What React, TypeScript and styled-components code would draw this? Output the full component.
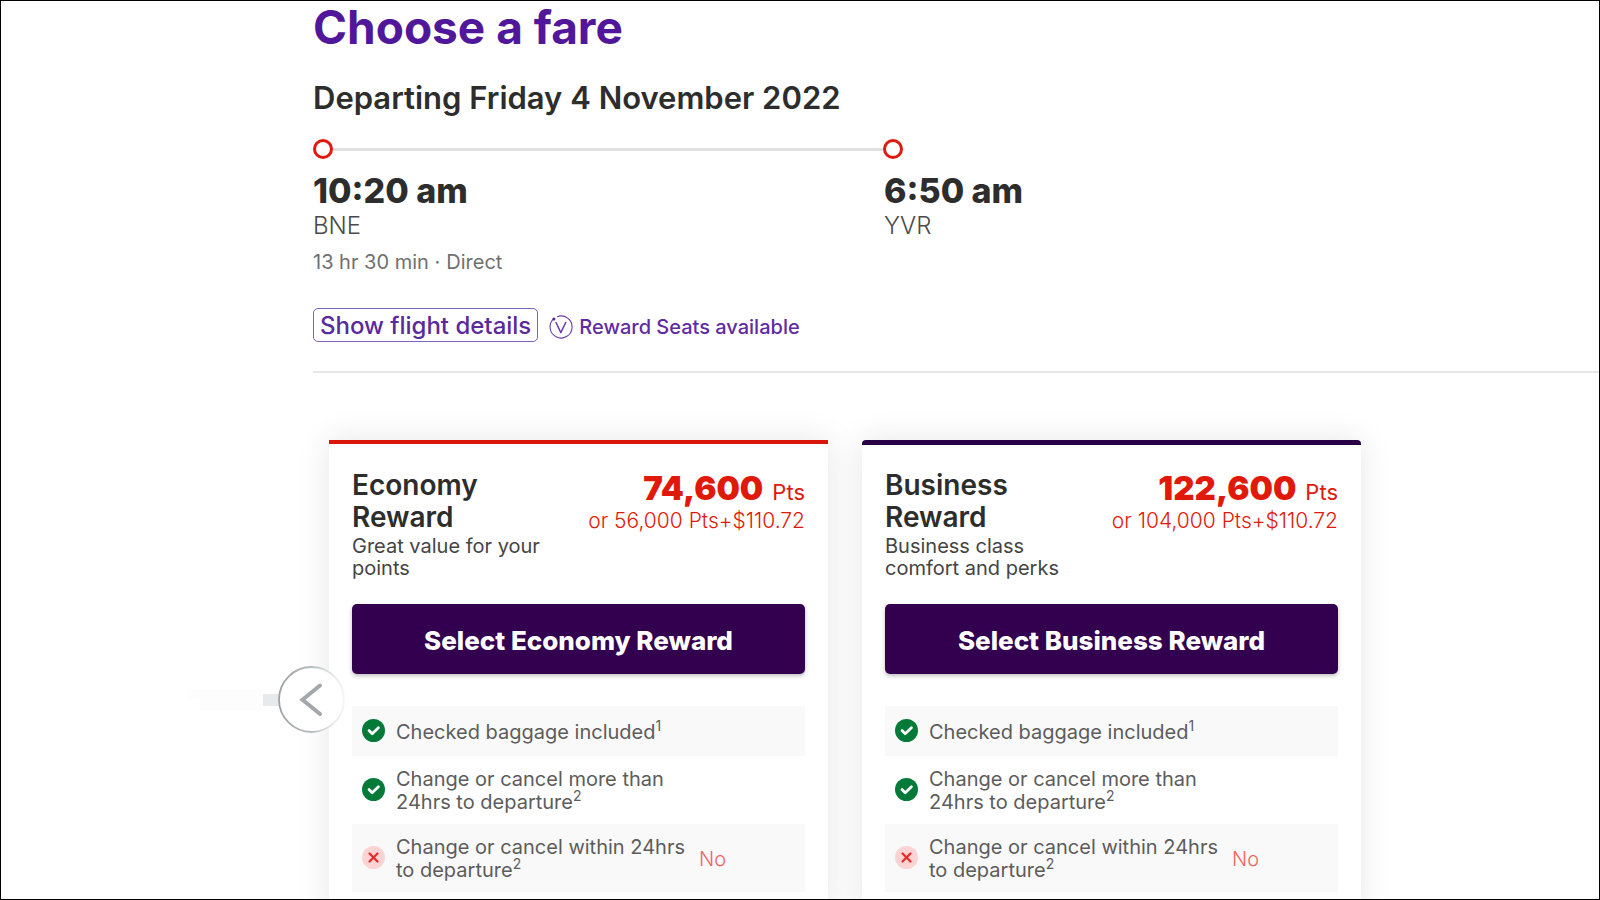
import React from 'react';
import styled, { createGlobalStyle } from 'styled-components';

const GlobalStyle = createGlobalStyle`
  *, *::before, *::after { box-sizing: border-box; }
  body {
    margin: 0;
    background: #fff;
    color: #2d2d2d;
    font-family: Inter, "Open Sans", sans-serif;
  }
  h1, h2, h3, p, ul { margin: 0; padding: 0; }
  button { font-family: inherit; cursor: pointer; }
`;

const Page = styled.main`
  height: 100vh;
  overflow: hidden;
  border: 1px solid #000;
  padding-left: 312px;
`;

const Title = styled.h1`
  color: #51179a;
  font-size: 46px;
  font-weight: 700;
  line-height: 52px;
`;

const DepartureDate = styled.h2`
  margin-top: 25px;
  font-size: 31px;
  font-weight: 600;
  line-height: 40px;
`;

const Track = styled.div`
  display: flex;
  align-items: center;
  max-width: 590px;
  margin-top: 21px;
`;

const Stop = styled.span`
  flex: none;
  width: 20px;
  height: 20px;
  border: 3px solid #e01a0e;
  border-radius: 50%;
`;

const Leg = styled.span`
  flex: 1;
  height: 3px;
  background: #e0e0e0;
`;

const Times = styled.div`
  display: grid;
  grid-template-columns: 571px 1fr;
  margin-top: 12px;
`;

const Time = styled.p`
  font-size: 34px;
  font-weight: 800;
  line-height: 40px;
`;

const Airport = styled.p`
  color: #4a4a4a;
  font-size: 24px;
  font-weight: 300;
  line-height: 30px;
`;

const Duration = styled.p`
  display: flex;
  gap: 6px;
  margin-top: 7px;
  color: #707070;
  font-size: 20px;
  line-height: 28px;
`;

const Actions = styled.div`
  display: flex;
  align-items: center;
  gap: 11px;
  margin-top: 32px;
  padding-bottom: 29px;
  border-bottom: 2px solid #e6e6e6;
`;

const DetailsButton = styled.button`
  height: 34px;
  padding: 2px 6px 0;
  border: 1px solid #7d62c4;
  border-radius: 5px;
  background: #fff;
  color: #5a2a9d;
  font-size: 24px;
  font-weight: 500;
  line-height: 30px;
`;

const SeatsNote = styled.span`
  display: flex;
  align-items: center;
  gap: 6px;
  padding-top: 3px;
  color: #5f2ba3;
  font-size: 20px;
  font-weight: 500;
  line-height: 24px;
`;

const Fares = styled.section`
  position: relative;
  display: flex;
  gap: 34px;
  margin: 67px 16px 0 16px;
`;

const Card = styled.article<{ $accent: string; $bar: number; $radius: number }>`
  flex: 0 1 499px;
  padding: ${(p) => 29 - p.$bar}px 23px 24px;
  border-top: ${(p) => p.$bar}px solid ${(p) => p.$accent};
  border-radius: ${(p) => p.$radius}px;
  background: #fff;
  box-shadow: 0 0 32px rgba(0, 0, 0, 0.1);
`;

const CardHead = styled.header`
  display: flex;
  justify-content: space-between;
`;

const Naming = styled.div`
  width: 200px;
`;

const FareName = styled.h3`
  width: min-content;
  font-size: 28px;
  font-weight: 600;
  line-height: 32px;
`;

const Tagline = styled.p`
  margin-top: 2px;
  color: #444;
  font-size: 20px;
  line-height: 22px;
`;

const Pricing = styled.div`
  color: #e1190a;
  text-align: right;
  white-space: nowrap;
`;

const Price = styled.p`
  display: flex;
  align-items: baseline;
  justify-content: flex-end;
  gap: 9px;
  font-size: 22px;
  line-height: 38px;
`;

const Points = styled.strong`
  font-size: 33px;
  font-weight: 900;
`;

const AltPrice = styled.p`
  font-size: 21px;
  font-weight: 300;
  line-height: 20px;
`;

const SelectButton = styled.button`
  display: block;
  width: 100%;
  height: 70px;
  margin-top: 25px;
  padding: 4px 0 0;
  border: 0;
  border-radius: 5px;
  background: #32004f;
  box-shadow: 0 2px 4px rgba(0, 0, 0, 0.25);
  color: #fff;
  font-size: 26px;
  font-weight: 800;
  line-height: 32px;
`;

const Features = styled.ul`
  margin-top: 32px;
  list-style: none;
`;

const Feature = styled.li`
  display: flex;
  align-items: center;
  min-height: 50px;
  padding: 12px 10px 10px;
  color: #5c5c5c;
  font-size: 20px;
  line-height: 23px;

  &:nth-child(odd) { background: #f9f9f9; }
`;

const FeatureIcon = styled.svg`
  flex: none;
  width: 23px;
  height: 23px;
  margin: 0 11px 3px 0;
`;

const FeatureText = styled.span`
  width: 292px;

  sup {
    font-size: 14px;
    line-height: 0;
  }
`;

const Answer = styled.span`
  padding: 0 0 0 11px;
  color: #f0655f;
  font-weight: 300;
`;

const PreviousButton = styled.button`
  position: absolute;
  top: 226px;
  left: -51px;
  width: 67px;
  height: 67px;
  padding: 0;
  border: 0;
  border-radius: 50%;
  background: #fff;

  svg { display: block; overflow: visible; }
`;

type Item = { text: string; note: string; included: boolean };

const items: Item[] = [
  { text: 'Checked baggage included', note: '1', included: true },
  { text: 'Change or cancel more than 24hrs to departure', note: '2', included: true },
  { text: 'Change or cancel within 24hrs to departure', note: '2', included: false },
];

const fares = [
  {
    name: 'Economy Reward', tagline: 'Great value for your points', points: '74,600',
    alt: 'or 56,000 Pts+$110.72', accent: '#d9160c', bar: 4, radius: 0,
  },
  {
    name: 'Business Reward', tagline: 'Business class comfort and perks', points: '122,600',
    alt: 'or 104,000 Pts+$110.72', accent: '#270045', bar: 5, radius: 4,
  },
];

const StatusIcon = ({ included }: { included: boolean }) => (
  <FeatureIcon viewBox="0 0 23 23" fill="none" aria-hidden="true">
    <circle cx="11.5" cy="11.5" r="11.5" fill={included ? '#047a38' : '#fdd3d3'} />
    {included ? (
      <path d="M7 11.6l3.2 3.1 6.2-5.900" stroke="#fff" strokeWidth="2.8" strokeLinecap="round" strokeLinejoin="round" />
    ) : (
      <path d="M7.500 7.500l8 8M15.500 7.500l-8 8" stroke="#e62a2a" strokeWidth="2.2" strokeLinecap="round" />
    )}
  </FeatureIcon>
);

const RewardIcon = () => (
  <svg width="24" height="24" viewBox="0 0 24 24" fill="none" stroke="#6a3cab" aria-hidden="true">
    <path d="M5.2 3.4A11 11 0 1 0 8.2 1.7" strokeWidth="1.1" />
    <circle cx="4.9" cy="4" r="1.6" fill="#5a2a9d" stroke="none" />
    <path d="M6.8 7l5 10.6L17 7" strokeWidth="1.500" strokeLinejoin="round" />
  </svg>
);

export default function App() {
  return (
    <>
      <GlobalStyle />
      <Page>
        <Title>Choose a fare</Title>
        <DepartureDate>Departing Friday 4 November 2022</DepartureDate>
        <Track aria-hidden="true">
          <Stop />
          <Leg />
          <Stop />
        </Track>
        <Times>
          <div>
            <Time>10:20 am</Time>
            <Airport>BNE</Airport>
          </div>
          <div>
            <Time>6:50 am</Time>
            <Airport>YVR</Airport>
          </div>
        </Times>
        <Duration>
          <span>13 hr 30 min ·</span>
          <span>Direct</span>
        </Duration>
        <Actions>
          <DetailsButton type="button">Show flight details</DetailsButton>
          <SeatsNote>
            <RewardIcon />
            Reward Seats available
          </SeatsNote>
        </Actions>
        <Fares>
          {fares.map((fare) => (
            <Card key={fare.name} $accent={fare.accent} $bar={fare.bar} $radius={fare.radius}>
              <CardHead>
                <Naming>
                  <FareName>{fare.name}</FareName>
                  <Tagline>{fare.tagline}</Tagline>
                </Naming>
                <Pricing>
                  <Price>
                    <Points>{fare.points}</Points>
                    <span>Pts</span>
                  </Price>
                  <AltPrice>{fare.alt}</AltPrice>
                </Pricing>
              </CardHead>
              <SelectButton type="button">Select {fare.name}</SelectButton>
              <Features>
                {items.map((item) => (
                  <Feature key={item.text}>
                    <StatusIcon included={item.included} />
                    <FeatureText>
                      {item.text}
                      <sup>{item.note}</sup>
                    </FeatureText>
                    {!item.included && <Answer>No</Answer>}
                  </Feature>
                ))}
              </Features>
            </Card>
          ))}
          <PreviousButton type="button" aria-label="Previous fares">
            <svg width="67" height="67" viewBox="0 0 67 67" fill="none" aria-hidden="true">
              <defs>
                <linearGradient id="ring" x1="0" x2="1" y1="0" y2="0">
                  <stop offset="0" stopColor="#9da1a4" />
                  <stop offset="0.5" stopColor="#b8bbbd" />
                  <stop offset="0.8" stopColor="#e4e5e6" />
                  <stop offset="1" stopColor="#f4f4f4" />
                </linearGradient>
              </defs>
              <path d="M-90 23h78v22h-66v-12h-12z" fill="#fdfdfe" />
              <path d="M-15 28H2v12h-17z" fill="#e6eaed" />
              <circle cx="33.5" cy="33.5" r="32.5" fill="#fff" stroke="url(#ring)" strokeWidth="1.8" />
              <path d="M42 19.5L24.5 33.8L42 48" stroke="#a3a8ab" strokeWidth="4" strokeLinecap="round" strokeLinejoin="miter" />
            </svg>
          </PreviousButton>
        </Fares>
      </Page>
    </>
  );
}
